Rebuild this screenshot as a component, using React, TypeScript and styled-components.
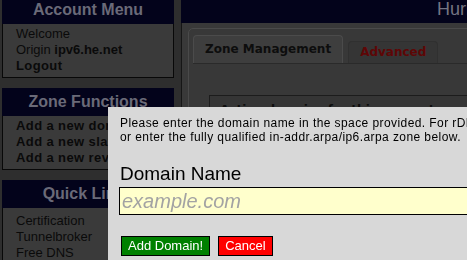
import styled, { createGlobalStyle } from 'styled-components';

// Page colours below are the dimmed look behind the modal.
const GlobalStyle = createGlobalStyle`
  html, body {
    margin: 0;
    padding: 0;
    overflow: hidden;
    background: #2e2e2e;
    font-family: "Liberation Sans", Arial, sans-serif;
  }
`;

const Page = styled.div`
  display: flex;
  gap: 7px;
  width: 1000px;
  padding-left: 2px;
`;

const Sidebar = styled.aside`
  width: 172px;
  flex: none;
  display: flex;
  flex-direction: column;
  gap: 10px;
  margin-top: -4px;
`;

const MenuHeader = styled.div`
  height: 28px;
  background: #03031b;
  color: #6a6a78;
  font-size: 16px;
  font-weight: bold;
  line-height: 28px;
  text-align: center;
`;

const MenuBody = styled.div<{ $top: number }>`
  background: #3a3a3a;
  border: 1px solid #080808;
  border-top: none;
  padding: ${({ $top }) => $top}px 0 3px 13px;
  font-size: 13px;
  line-height: 16px;
  color: #0a0a0a;
`;

const MenuLink = styled.div<{ $bold?: boolean }>`
  font-weight: ${({ $bold }) => ($bold ? 'bold' : 'normal')};
  letter-spacing: ${({ $bold }) => ($bold ? '0.4px' : '0')};
  white-space: nowrap;
`;

const Main = styled.main`
  flex: 1;
  display: flex;
  flex-direction: column;
`;

const MainHeader = styled.header`
  height: 23px;
  background: #03031b;
  color: #747482;
  font-size: 18px;
  line-height: 18px;
  padding-left: 256px;
  white-space: nowrap;
`;

const MainBody = styled.div`
  background: #393939;
  border-left: 1px solid #161616;
  padding: 5px 0 0 6px;
  height: 300px;
`;

const TabPanel = styled.div`
  border: 1px solid #4a4a4a;
  border-radius: 5px;
  background: #383838;
  padding: 6px 0 0 4px;
  height: 260px;
`;

const TabRow = styled.div`
  display: flex;
  align-items: flex-end;
  gap: 5px;
  border-bottom: 1px solid #2a2a2a;
`;

const Tab = styled.div<{ $active?: boolean }>`
  font-family: "DejaVu Sans", Verdana, sans-serif;
  font-size: 12px;
  font-weight: bold;
  padding: 0 11px;
  height: ${({ $active }) => ($active ? 27 : 21)}px;
  line-height: ${({ $active }) => ($active ? 27 : 21)}px;
  background: ${({ $active }) => ($active ? '#3e3e3e' : '#353535')};
  color: ${({ $active }) => ($active ? '#0d0d0d' : '#5e0606')};
  border: 1px solid ${({ $active }) => ($active ? '#4b4b4b' : '#303030')};
  border-bottom: none;
  border-radius: 4px 4px 0 0;
  white-space: nowrap;
`;

const ZoneBox = styled.div`
  margin: 31px 0 0 16px;
  border: 1px solid #1c1c1c;
  background: #353535;
  padding: 7px 10px;
  display: flex;
  align-items: center;
  gap: 140px;
  font-family: "DejaVu Sans", Verdana, sans-serif;
  font-size: 12px;
  font-weight: bold;
  color: #0d0d0d;
`;

const HelpDot = styled.span`
  width: 10px;
  height: 10px;
  border-radius: 50%;
  background: #34405e;
`;

const Dialog = styled.div`
  position: fixed;
  left: 108px;
  top: 107px;
  z-index: 11;
  width: 520px;
  height: 200px;
  background: #d8d8d8;
  padding: 9px 0 0 12px;
  box-sizing: border-box;
  color: #000;
`;

const Hint = styled.p`
  margin: 0;
  font-size: 12px;
  line-height: 14px;
  letter-spacing: 0.42px;
  white-space: nowrap;
`;

const FieldLabel = styled.label`
  display: block;
  margin-top: 19px;
  font-size: 19px;
  line-height: 22px;
`;

const DomainInput = styled.input`
  display: block;
  margin: 2px 0 0 -1px;
  width: 420px;
  height: 28px;
  box-sizing: border-box;
  border: 1px solid #000;
  background: #ffffcc;
  padding: 0 2px;
  font-family: "Liberation Sans", Arial, sans-serif;
  font-size: 20px;
  font-style: italic;
  outline: none;
  &::placeholder {
    color: #a3a3a3;
  }
`;

const ButtonRow = styled.div`
  display: flex;
  gap: 8px;
  margin: 21px 0 0 1px;
`;

const ActionButton = styled.button<{ $tone: 'go' | 'stop' }>`
  height: 20px;
  padding: 0 6px;
  border: 1px solid #000;
  border-radius: 0;
  background: ${({ $tone }) => ($tone === 'go' ? '#008000' : '#ff0000')};
  color: #fff;
  font-family: "Liberation Sans", Arial, sans-serif;
  font-size: 13px;
  line-height: 16px;
  cursor: pointer;
`;

const App = () => {
  return (
    <>
      <GlobalStyle />
      <Page>
        <Sidebar>
          <div>
            <MenuHeader>Account Menu</MenuHeader>
            <MenuBody $top={2}>
              <MenuLink>Welcome</MenuLink>
              <MenuLink>
                Origin <b>ipv6.he.net</b>
              </MenuLink>
              <MenuLink $bold>Logout</MenuLink>
            </MenuBody>
          </div>
          <div>
            <MenuHeader>Zone Functions</MenuHeader>
            <MenuBody $top={2}>
              <MenuLink $bold>Add a new domain</MenuLink>
              <MenuLink $bold>Add a new slave</MenuLink>
              <MenuLink $bold>Add a new reverse</MenuLink>
            </MenuBody>
          </div>
          <div>
            <MenuHeader>Quick Links</MenuHeader>
            <MenuBody $top={5}>
              <MenuLink>Certification</MenuLink>
              <MenuLink>Tunnelbroker</MenuLink>
              <MenuLink>Free DNS</MenuLink>
            </MenuBody>
          </div>
        </Sidebar>
        <Main>
          <MainHeader>Hurricane Electric Free DNS Management</MainHeader>
          <MainBody>
            <TabPanel>
              <TabRow>
                <Tab $active>Zone Management</Tab>
                <Tab>Advanced</Tab>
              </TabRow>
              <ZoneBox>
                <span>Active domains for this account</span>
                <HelpDot />
              </ZoneBox>
            </TabPanel>
          </MainBody>
        </Main>
      </Page>
      <Dialog>
        <Hint>Please enter the domain name in the space provided. For rDNS zones, enter the IP block</Hint>
        <Hint>or enter the fully qualified in-addr.arpa/ip6.arpa zone below.</Hint>
        <FieldLabel htmlFor="domain">Domain Name</FieldLabel>
        <DomainInput id="domain" placeholder="example.com" />
        <ButtonRow>
          <ActionButton $tone="go">Add Domain!</ActionButton>
          <ActionButton $tone="stop">Cancel</ActionButton>
        </ButtonRow>
      </Dialog>
    </>
  );
};

export default App;
